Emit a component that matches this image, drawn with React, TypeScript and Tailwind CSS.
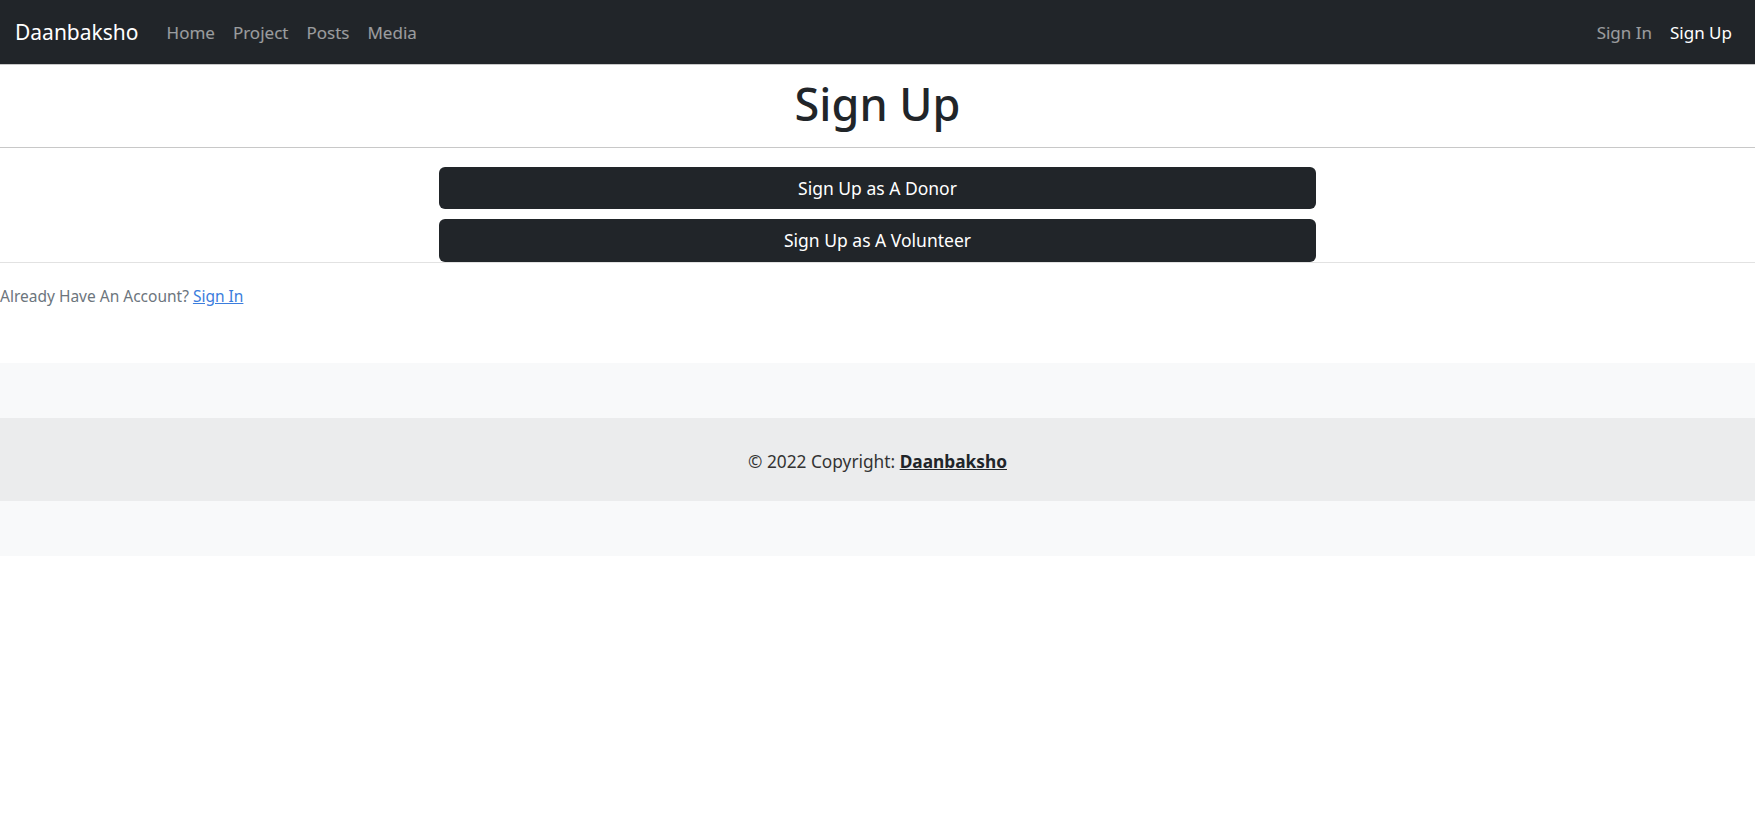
import React from "react";

const navLinks = ["Home", "Project", "Posts", "Media"];

const Navbar = () => {
  return (
    <nav className="h-[65px] pt-[2px] bg-[#212529] flex items-center justify-between px-[15px] border-b border-[#c8c8c8]">
      <div className="flex items-center">
        <a href="#" className="text-[21px] text-white mr-[19px]">
          Daanbaksho
        </a>
        <ul className="flex items-center">
          {navLinks.map((link) => (
            <li key={link}>
              <a href="#" className="px-[9px] text-[17px] text-white/55">
                {link}
              </a>
            </li>
          ))}
        </ul>
      </div>
      <ul className="flex items-center">
        <li>
          <a href="#" className="px-[9px] text-[17px] text-white/55">
            Sign In
          </a>
        </li>
        <li>
          <a href="#" className="pl-[9px] pr-[8px] text-[17px] text-white">
            Sign Up
          </a>
        </li>
      </ul>
    </nav>
  );
};

const App = () => {
  return (
    <div className="min-h-screen bg-white font-['Noto_Sans',sans-serif] text-[#212529]">
      <Navbar />
      {/* title */}
      <div className="h-[83px] pb-[6px] flex items-center justify-center border-b border-[#c8c8c8]">
        <h1 className="text-[45px] font-medium leading-none">Sign Up</h1>
      </div>
      {/* buttons */}
      <div className="pt-[19px] border-b border-[#e2e2e2]">
        <div className="w-1/2 mx-auto flex flex-col gap-[10px]">
          <button className="h-[42px] bg-[#212529] text-white rounded-md text-[17.5px]">
            Sign Up as A Donor
          </button>
          <button className="h-[43px] bg-[#212529] text-white rounded-md text-[17.5px]">
            Sign Up as A Volunteer
          </button>
        </div>
      </div>
      <p className="mt-[22px] text-[15.5px] text-[#6c757d]">
        Already Have An Account?{" "}
        <a href="#" className="text-[#3b7ddd] underline">
          Sign In
        </a>
      </p>
      {/* footer */}
      <footer className="mt-[55px] bg-[#f8f9fa]">
        <div className="h-[55px]" />
        <div className="h-[83px] pt-[4px] bg-black/[0.05] flex items-center justify-center text-[17.3px] text-[#333]">
          <span>
            © 2022 Copyright:{" "}
            <a href="#" className="font-bold underline text-[#212529]">
              Daanbaksho
            </a>
          </span>
        </div>
        <div className="h-[55px]" />
      </footer>
    </div>
  );
};

export default App;
